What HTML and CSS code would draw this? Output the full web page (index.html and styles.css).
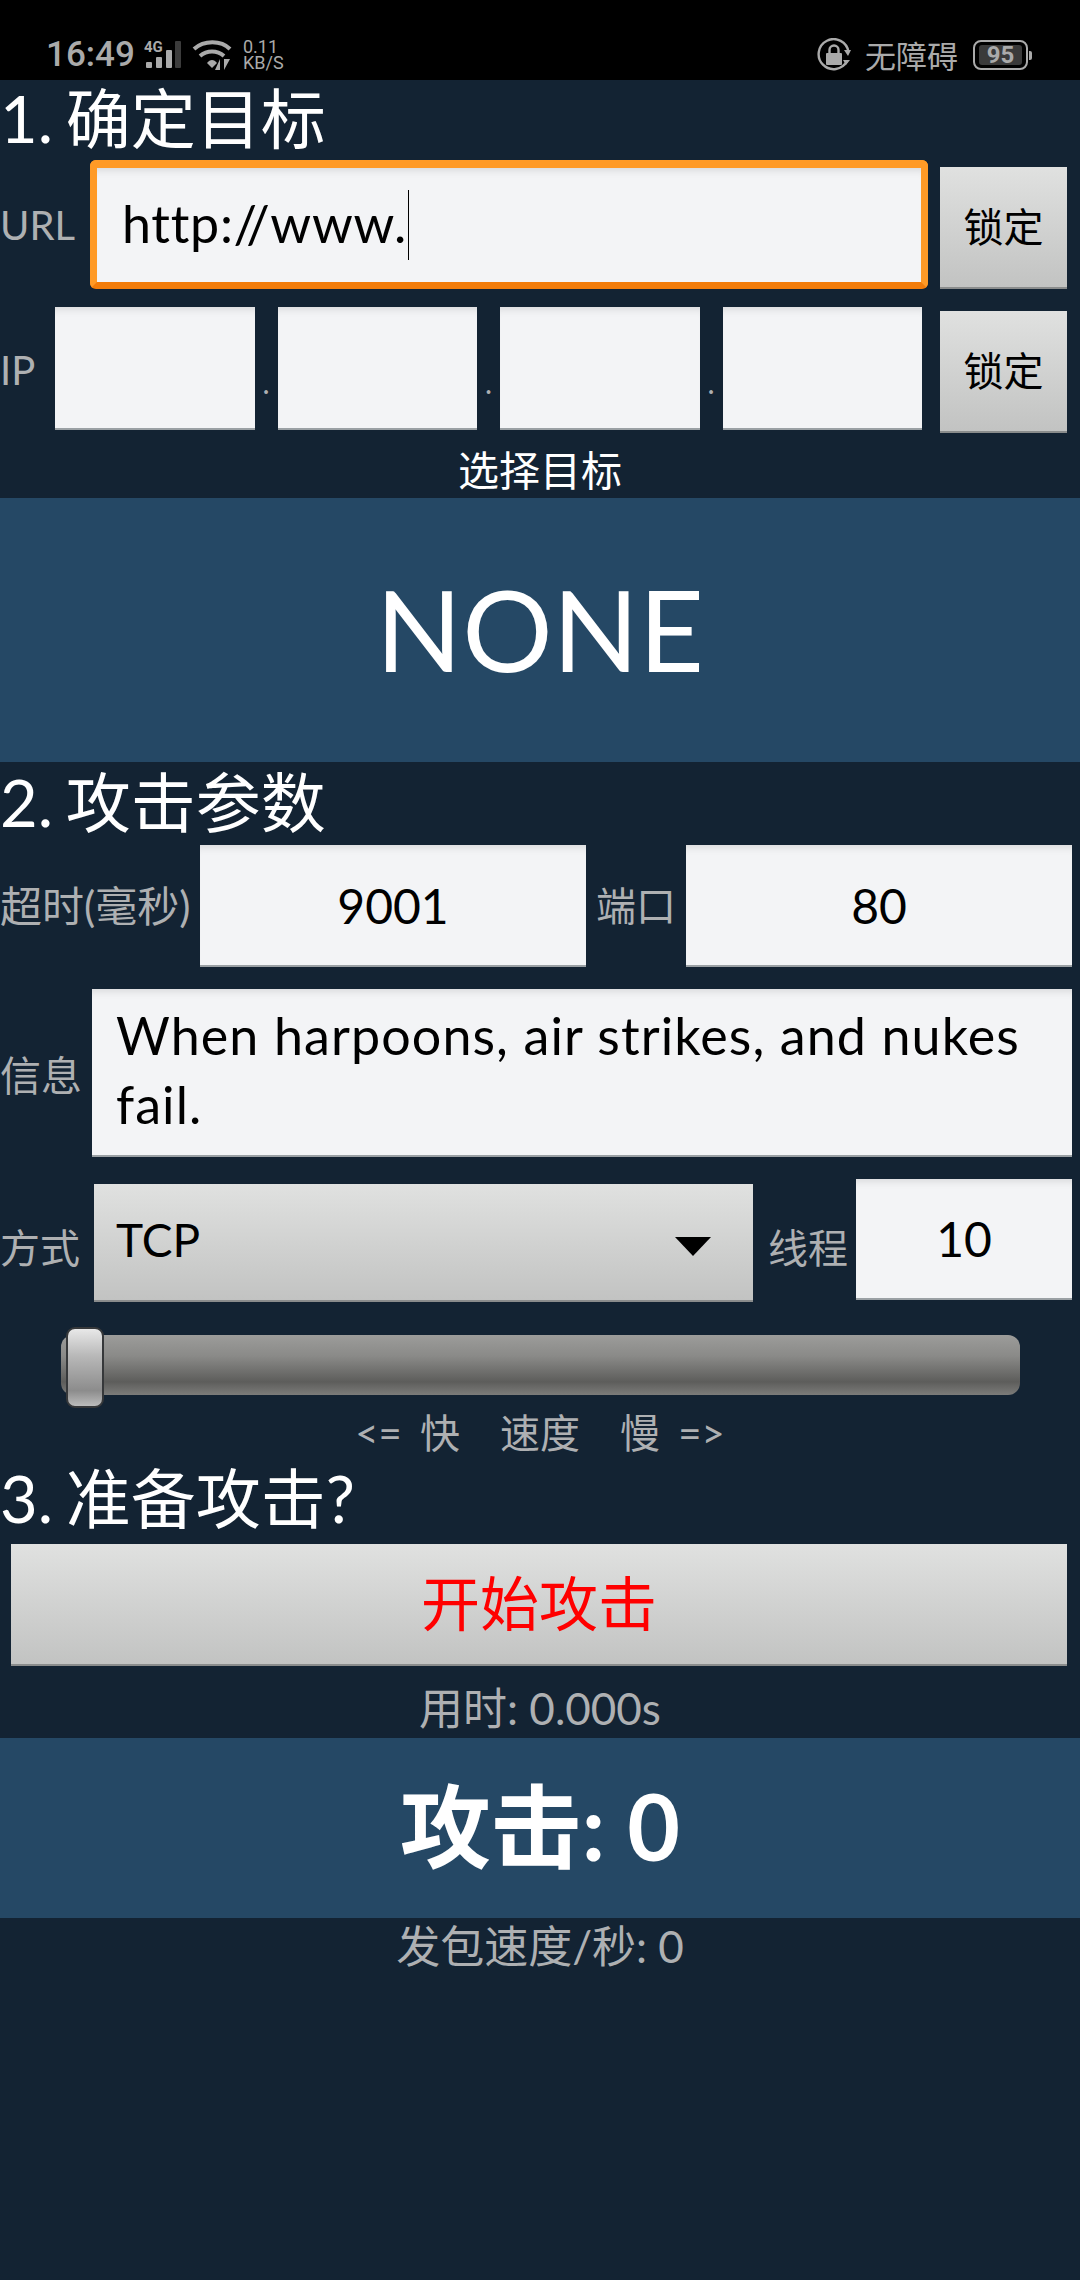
FILE: index.html
```html
<!DOCTYPE html>
<html lang="zh">
<head>
<meta charset="utf-8">
<title>LOIC</title>
<link rel="stylesheet" href="styles.css">
</head>
<body>
<header class="status">
  <div class="status-left">
    <span class="time">16:49</span>
    <span class="signal">
      <span class="net">4G</span>
      <svg class="bars" width="38" height="30" viewBox="0 0 38 30"><rect x="2" y="21" width="6" height="6" rx="1" fill="#aaa"/><rect x="12" y="16" width="6" height="11" rx="1" fill="#aaa"/><rect x="22" y="9" width="6" height="18" rx="1" fill="#aaa"/><rect x="31" y="0" width="6" height="27" rx="1" fill="#3c3c3c"/></svg>
    </span>
    <svg class="wifi" width="44" height="32" viewBox="0 0 44 32"><g fill="none" stroke="#aaa" stroke-width="4"><path d="M2 10C12 1 29 1 38 10"/><path d="M8 17C15 11 25 11 32 17"/></g><path d="M15 24C18 20 22 20 25 24L20 29Z" fill="#aaa"/><path d="M28 31V20L23 31ZM32 20V31L38 20Z" fill="#aaa"/></svg>
    <span class="speed">0.11 KB/S</span>
  </div>
  <div class="status-right">
    <svg class="rotate" width="34" height="34" viewBox="0 0 34 34"><path d="M30 23A15 15 0 1 1 31.500 14" fill="none" stroke="#aaa" stroke-width="2.400"/><path d="M27 12L34 12L31 18Z M26 22L33 22L29 27Z" fill="#aaa"/><rect x="9" y="15" width="16" height="12" rx="1" fill="#aaa"/><path d="M12.500 15V12A4.500 4.500 0 0 1 21.500 12V15" fill="none" stroke="#aaa" stroke-width="2.400"/></svg>
    <span class="a11y">无障碍</span>
    <span class="battery"><span class="battery-fill">95</span></span>
    <span class="nub"></span>
  </div>
</header>

<main>
  <h2 class="heading first">1. 确定目标</h2>
  <div class="row url-row">
    <span class="label label-url">URL</span>
    <div class="field focused"><span class="entry">http://www.<span class="caret"></span></span></div>
    <button class="btn lock">锁定</button>
  </div>
  <div class="row ip-row">
    <span class="label label-ip">IP</span>
    <div class="field octet"></div><span class="dot">.</span>
    <div class="field octet"></div><span class="dot">.</span>
    <div class="field octet"></div><span class="dot">.</span>
    <div class="field octet"></div>
    <button class="btn lock lock-ip">锁定</button>
  </div>
  <div class="pick">选择目标</div>
  <div class="band target">NONE</div>

  <h2 class="heading second">2. 攻击参数</h2>
  <div class="row param-row">
    <span class="label label-timeout">超时(毫秒)</span>
    <div class="field num param">9001</div>
    <span class="label label-port">端口</span>
    <div class="field num param">80</div>
  </div>
  <div class="row info-row">
    <span class="label label-info">信息</span>
    <div class="field message">When harpoons, air strikes, and nukes fail.</div>
  </div>
  <div class="row method-row">
    <span class="label label-method">方式</span>
    <div class="select"><span>TCP</span><span class="arrow"></span></div>
    <span class="label label-threads">线程</span>
    <div class="field num threads">10</div>
  </div>
  <div class="slider"><div class="track"></div><div class="thumb"></div></div>
  <div class="speed-label"><span>&lt;= 快</span><span>速度</span><span>慢 =&gt;</span></div>

  <h2 class="heading third">3. 准备攻击?</h2>
  <button class="btn fire">开始攻击</button>
  <div class="elapsed">用时: 0.000s</div>
  <div class="band attack">攻击: 0</div>
  <div class="rate">发包速度/秒: 0</div>
</main>
</body>
</html>
```
FILE: styles.css
```css
* { box-sizing: border-box; }
html, body { margin: 0; padding: 0; }
body {
  width: 1080px;
  height: 2280px;
  background: #132333;
  font-family: Lato, "Noto Sans CJK SC", sans-serif;
  color: #aeb0b2;
  overflow: hidden;
}

/* status bar */
.status {
  height: 80px;
  background: #000;
  display: flex;
  justify-content: space-between;
  align-items: flex-start;
  padding: 38px 48px 0 46px;
  color: #aaa;
}
.status-left, .status-right { display: flex; align-items: flex-start; position: relative; }
.time { font: 500 35px/34px Roboto, sans-serif; width: 98px; }
.signal { position: relative; width: 48px; height: 30px; }
.net { position: absolute; left: 0; top: 2px; font: 700 15px/14px Roboto, sans-serif; }
.bars { position: absolute; left: 0; top: 3px; }
.wifi { margin-top: 1px; }
.speed { font: 400 18px/16px Roboto, sans-serif; margin-left: 7px; margin-top: 1px; width: 42px; }
.rotate { margin-top: 0; }
.a11y { font: 400 31px/34px "Noto Sans CJK SC", sans-serif; margin-left: 14px; width: 93px; }
.battery { margin-left: 15px; margin-top: 2px; width: 55px; height: 30px; border: 2px solid #aaa; border-radius: 8px; padding: 3px 4px; }
.battery-fill { display: block; height: 20px; border-radius: 3px; background: #3a3a3a; text-align: center; font: 700 24px/21px Roboto, sans-serif; color: #aaa; }
.nub { width: 3px; height: 9px; margin-top: 13px; margin-left: 1px; background: #aaa; border-radius: 0 2px 2px 0; }

/* headings */
.heading {
  margin: 0;
  color: #fff;
  font-weight: 400;
  font-size: 65px;
  line-height: 76px;
  word-spacing: -4px;
}
.first { height: 80px; }
.second { height: 83px; padding-top: 2px; }
.third { height: 84px; }

/* rows */
.row { display: flex; align-items: center; }
.label { font-size: 40px; line-height: 48px; color: #aeb0b2; white-space: nowrap; flex: none; }
.url-row { height: 129px; }
.ip-row { height: 126px; margin-top: 18px; align-items: flex-start; }
.param-row { height: 122px; }
.info-row { height: 168px; margin-top: 22px; }
.method-row { height: 123px; margin-top: 22px; }

.label-url { width: 90px; }
.label-ip { width: 55px; align-self: center; }
.label-timeout { width: 200px; font-size: 42px; }
.label-port { width: 100px; padding-left: 10px; }
.label-info { width: 92px; font-size: 41px; padding-top: 6px; }
.label-method { width: 94px; padding-top: 14px; }
.label-threads { width: 103px; padding-left: 15px; padding-top: 14px; }

.field {
  background: #f3f4f6;
  color: #000;
  font-size: 52px;
  border-bottom: 2px solid #9aa0a4;
  box-shadow: inset 0 9px 8px -7px rgba(0, 0, 0, .12);
  flex: none;
}
.focused {
  width: 838px;
  height: 129px;
  border: 7px solid #ff9a26;
  border-top-width: 8px;
  border-bottom-color: #f27c0a;
  border-radius: 6px;
  display: flex;
  align-items: center;
  padding-left: 25px;
  padding-bottom: 4px;
}
.entry { position: relative; white-space: nowrap; letter-spacing: .7px; }
.caret { position: absolute; right: -2px; top: -2px; bottom: -6px; width: 1px; background: #000; }
.octet { width: 199.5px; height: 123px; }
.dot { width: 23px; flex: none; text-align: center; font-size: 30px; line-height: 30px; margin-top: 60px; color: #aeb0b2; }
.num { display: flex; align-items: center; justify-content: center; font-size: 48px; }
.param { width: 386px; height: 122px; }
.message { width: 980px; height: 168px; padding: 12px 24px 0; line-height: 69px; letter-spacing: 1.100px; }
.threads { width: 216px; height: 121px; align-self: flex-start; }

/* buttons */
.btn {
  display: block;
  border: 0;
  border-bottom: 2px solid #8a8c8c;
  background: linear-gradient(#e0e1e0, #c2c3c2);
  font-family: "Noto Sans CJK SC", sans-serif;
  color: #000;
}
.lock { width: 127px; height: 122px; margin-left: 12px; padding: 0 0 4px; font-size: 40px; flex: none; align-self: flex-end; }
.lock-ip { margin-left: 18px; }
.fire { width: 1056px; height: 122px; margin-left: 11px; padding: 0 0 8px; font-size: 59px; color: #f00; }

.select {
  width: 659px;
  height: 118px;
  align-self: flex-end;
  background: linear-gradient(#e0e1e0, #c2c3c2);
  border-bottom: 2px solid #8a8c8c;
  color: #000;
  font-size: 46px;
  display: flex;
  align-items: center;
  justify-content: space-between;
  padding: 0 42px 6px 22px;
  flex: none;
}
.arrow { width: 0; height: 0; margin-top: 14px; border-left: 18px solid transparent; border-right: 18px solid transparent; border-top: 19px solid #000; }

/* slider */
.slider { position: relative; height: 81px; margin-top: 25px; }
.track {
  position: absolute; left: 61px; top: 8px;
  width: 959px; height: 60px;
  border-radius: 12px;
  background: linear-gradient(#9c9c9a, #8a8a88 35%, #5d5d5b 78%, #7c7c7a);
}
.thumb {
  position: absolute; left: 66px; top: 0;
  width: 38px; height: 81px;
  border-radius: 9px;
  border: 2px solid #36383a;
  background: linear-gradient(#e8e8e8, #b8b8b8 35%, #8c8c8c 80%, #bcbcbc);
}

/* text rows */
.pick { height: 65px; padding-top: 8px; line-height: 60px; text-align: center; color: #fff; font-size: 41px; }
.speed-label { height: 52px; line-height: 50px; display: flex; justify-content: center; gap: 40px; font-size: 40px; word-spacing: 8px; }
.elapsed { height: 72px; padding-top: 10px; line-height: 65px; text-align: center; font-size: 44px; }
.rate { height: 56px; line-height: 56px; text-align: center; font-size: 44px; }

/* bands */
.band { background: #254865; color: #fff; display: flex; align-items: center; justify-content: center; }
.target { height: 264px; padding-bottom: 4px; font-size: 113px; }
.attack { height: 180px; padding-bottom: 14px; font-size: 91px; font-weight: 700; }
```
